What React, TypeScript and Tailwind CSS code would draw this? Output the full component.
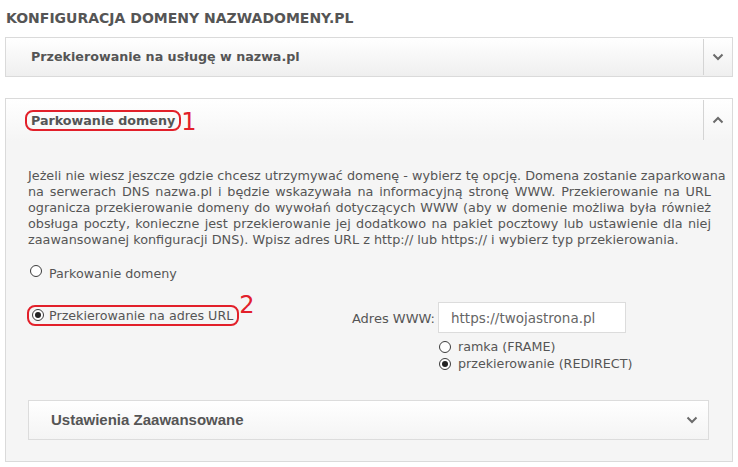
import { ReactNode } from "react";

const lines = [
  "Jeżeli nie wiesz jeszcze gdzie chcesz utrzymywać domenę - wybierz tę opcję. Domena zostanie zaparkowana",
  "na serwerach DNS nazwa.pl i będzie wskazywała na informacyjną stronę WWW. Przekierowanie na URL",
  "ogranicza przekierowanie domeny do wywołań dotyczących WWW (aby w domenie możliwa była również",
  "obsługa poczty, konieczne jest przekierowanie jej dodatkowo na pakiet pocztowy lub ustawienie dla niej",
  "zaawansowanej konfiguracji DNS). Wpisz adres URL z http:// lub https:// i wybierz typ przekierowania.",
];

function Chevron({ up = false }: { up?: boolean }) {
  return (
    <svg width="12" height="8" viewBox="0 0 12 8" className={up ? "rotate-180" : ""}>
      <polyline points="1.5,1.5 6,6 10.5,1.5" fill="none" stroke="#6b6b6b" strokeWidth="2" />
    </svg>
  );
}

function Radio({ checked = false }: { checked?: boolean }) {
  return (
    <span className="flex h-[12px] w-[12px] shrink-0 items-center justify-center rounded-full border border-[#3c3c3c] bg-white">
      {checked && <span className="h-[6px] w-[6px] rounded-full bg-[#222]" />}
    </span>
  );
}

function Marked({ n, children, numClass }: { n: string; children: ReactNode; numClass: string }) {
  return (
    <div className="relative inline-flex rounded-[8px] border-2 border-[#e2202a]">
      {children}
      <span className={`absolute text-[24px] leading-none text-[#e2202a] ${numClass}`}>{n}</span>
    </div>
  );
}

export default function App() {
  return (
    <div className="h-[467px] w-[738px] bg-white font-['DejaVu_Sans',sans-serif] text-[12.7px] text-[#555]">
      <div className="pl-[6px] pt-[10px] text-[14px] font-bold uppercase leading-[16px] text-[#555]">
        Konfiguracja domeny nazwadomeny.pl
      </div>

      <div className="ml-[5px] mt-[11px] flex h-[40px] w-[728px] border border-[#dadada] bg-gradient-to-b from-white to-[#efefef]">
        <div className="flex flex-1 items-center pl-[25px] font-bold">Przekierowanie na usługę w nazwa.pl</div>
        <div className="my-[1px] flex w-[29px] items-center justify-center border-l border-[#d4d4d4]">
          <Chevron />
        </div>
      </div>

      <div className="ml-[5px] mt-[21px] h-[364px] w-[728px] border border-[#dadada] bg-[#f5f5f5]">
        <div className="flex h-[42px] bg-gradient-to-b from-white to-[#f5f5f5]">
          <div className="flex flex-1 items-center pl-[19px]">
            <Marked n="1" numClass="left-[100%] top-[-2px] ml-[2px]">
              <span className="px-[4px] font-bold leading-[17px]">Parkowanie domeny</span>
            </Marked>
          </div>
          <div className="my-[1px] flex w-[29px] items-center justify-center border-l border-[#d4d4d4]">
            <Chevron up />
          </div>
        </div>

        <div className="px-[21px] pt-[27px] pb-[22px]">
          <div className="pl-[1px] text-[12.8px] leading-[16px]">
            {lines.map((l, i) => (
              <div
                key={i}
                className={i < lines.length - 1 ? "whitespace-nowrap text-justify [text-align-last:justify]" : "whitespace-nowrap"}
              >
                {l}
              </div>
            ))}
          </div>

          <div className="mt-[13px] flex h-[20px] items-center gap-[7px] pl-[3px]">
            <Radio />
            <span className="mt-[5px]">Parkowanie domeny</span>
          </div>

          <div className="mt-[21px] flex">
            <div className="w-[313px] pt-[2px]">
              <Marked n="2" numClass="left-[100%] top-[-14px] ml-[2px]">
                <span className="flex h-[17px] items-center gap-[5px] pl-[3px] pr-[4px]">
                  <Radio checked />
                  <span className="leading-[17px]">Przekierowanie na adres URL</span>
                </span>
              </Marked>
            </div>
            <div className="grid grid-cols-[98px_188px]">
              <label className="flex items-center justify-end pr-[3px] pt-[3px] text-[13px]">Adres WWW:</label>
              <input
                readOnly
                placeholder="https://twojastrona.pl"
                className="h-[31px] w-[188px] border border-[#dcdcdc] bg-white px-[12px] font-['DejaVu_Sans',sans-serif] text-[13.5px] text-[#666] outline-none placeholder:text-[#666]"
              />
              <div />
              <div className="mt-[5px] flex flex-col whitespace-nowrap pl-[1px]">
                <div className="flex h-[17px] items-center gap-[7px]">
                  <Radio />
                  <span>ramka (FRAME)</span>
                </div>
                <div className="flex h-[17px] items-center gap-[7px]">
                  <Radio checked />
                  <span>przekierowanie (REDIRECT)</span>
                </div>
              </div>
            </div>
          </div>

          <div className="mt-[28px] ml-[1px] flex h-[40px] w-[681px] items-center justify-between border border-[#dcdcdc] bg-gradient-to-b from-white to-[#f4f4f4] pl-[22px] pr-[10px]">
            <span className="font-['Liberation_Sans_Narrow','Liberation_Sans',sans-serif] text-[15px] font-bold text-[#555]">
              Ustawienia Zaawansowane
            </span>
            <Chevron />
          </div>
        </div>
      </div>
    </div>
  );
}
